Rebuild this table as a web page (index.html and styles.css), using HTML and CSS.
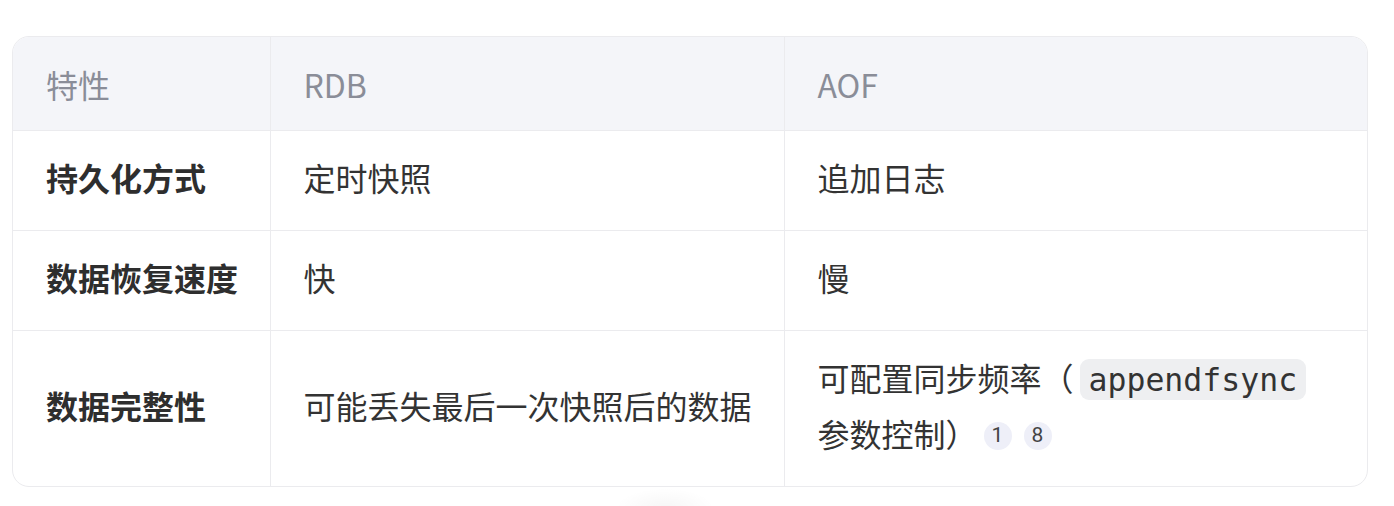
FILE: index.html
```html
<!DOCTYPE html>
<html lang="zh-CN">
<head>
<meta charset="utf-8">
<title>RDB vs AOF</title>
<link rel="stylesheet" href="styles.css">
</head>
<body>
<div class="page">
  <div class="table-wrap">
    <table class="cmp">
      <colgroup>
        <col class="c1">
        <col class="c2">
        <col class="c3">
      </colgroup>
      <thead>
        <tr>
          <th>特性</th>
          <th>RDB</th>
          <th>AOF</th>
        </tr>
      </thead>
      <tbody>
        <tr>
          <td><strong>持久化方式</strong></td>
          <td>定时快照</td>
          <td>追加日志</td>
        </tr>
        <tr>
          <td><strong>数据恢复速度</strong></td>
          <td>快</td>
          <td>慢</td>
        </tr>
        <tr>
          <td><strong>数据完整性</strong></td>
          <td>可能丢失最后一次快照后的数据</td>
          <td>可配置同步频率（<code>appendfsync</code> 参数控制）<span class="cite">1</span><span class="cite">8</span></td>
        </tr>
      </tbody>
    </table>
  </div>
  <div class="fab-shadow"></div>
</div>
</body>
</html>
```

FILE: styles.css
```css
html, body {
  margin: 0;
  padding: 0;
  background: #ffffff;
}

body {
  font-family: "Noto Sans CJK SC", "Noto Sans", sans-serif;
  color: #333333;
}

.page {
  position: relative;
  padding: 36px 26px 0 12px;
  height: 470px;
  overflow: hidden;
}

.table-wrap {
  border: 1px solid #ebebee;
  border-radius: 17px;
  overflow: hidden;
}

.cmp {
  width: 100%;
  border-collapse: collapse;
  table-layout: fixed;
  font-size: 32px;
  line-height: 56px;
}

.c1 { width: 257px; }
.c2 { width: 514px; }

.cmp th,
.cmp td {
  text-align: left;
  vertical-align: middle;
  padding: 18px 14px 25px 33px;
  border-left: 1px solid #ebebee;
  border-top: 1px solid #ebebee;
}

.cmp th:first-child,
.cmp td:first-child {
  border-left: none;
}

.cmp thead th {
  border-top: none;
  background: #f4f5f9;
  color: #8a8d98;
  font-weight: 400;
  padding-top: 19px;
  padding-bottom: 18px;
}

.cmp td:last-child {
  padding-right: 30px;
}

.cmp strong {
  font-weight: 700;
  color: #2e2e2e;
}

.cmp code {
  font-family: "DejaVu Sans Mono", "Liberation Mono", monospace;
  font-size: 31.5px;
  line-height: 1;
  background: #eeeff1;
  color: #333333;
  border-radius: 9px;
  padding: 3px 9px 2px;
  margin-left: 6px;
}

.cite {
  display: inline-flex;
  align-items: center;
  justify-content: center;
  width: 28px;
  height: 28px;
  border-radius: 50%;
  background: #eeeff8;
  color: #444444;
  font-family: "Roboto", "Noto Sans", sans-serif;
  font-size: 21px;
  line-height: 1;
  vertical-align: 5px;
  margin-left: 6px;
}

.cite + .cite {
  margin-left: 12px;
}

.fab-shadow {
  position: absolute;
  left: 615px;
  top: 488px;
  width: 100px;
  height: 40px;
  border-radius: 50%;
  background: radial-gradient(ellipse at center, rgba(0,0,0,0.035) 0%, rgba(0,0,0,0) 70%);
}
```
